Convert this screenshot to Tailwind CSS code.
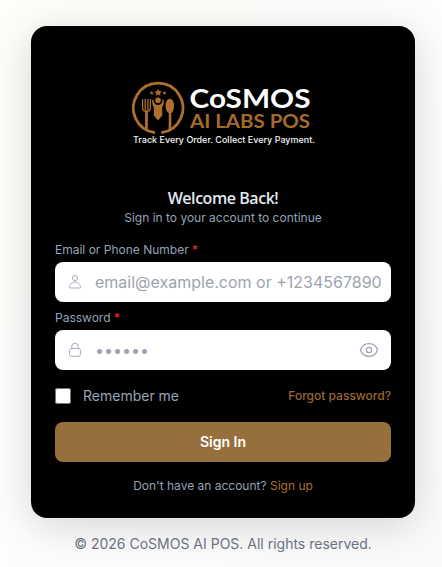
<!DOCTYPE html>
<html lang="en">
<head>
  <meta charset="UTF-8" />
  <meta name="viewport" content="width=device-width, initial-scale=1.0" />
  <title>CoSMOS AI POS - Sign In</title>
  <script src="https://cdn.jsdelivr.net/npm/@tailwindcss/browser@4"></script>
</head>
<body class="h-screen overflow-hidden bg-linear-to-br from-[#fffdf8] via-[#fdfdfd] to-[#fafafa] font-['Inter',sans-serif] text-[#94a3b8]">
  <div class="flex flex-col items-center pt-[26px] pl-1">
    <div class="w-[384px] rounded-2xl bg-black p-6 shadow-[0_8px_40px_rgba(0,0,0,0.16)]">

      <!-- Logo -->
      <div class="flex h-[136px] justify-center">
        <svg class="h-[136px] w-[336px]" viewBox="55 50 336 136" fill="none">
          <path d="M155 132.6A24.8 24.8 0 1 1 161.3 132.6" stroke="#ad702c" stroke-width="2.8" />
          <g fill="#ad702c">
            <path d="M158.2 88.8l1.1 2.3 2.5.3-1.8 1.8.5 2.5-2.3-1.2-2.3 1.2.5-2.5-1.8-1.8 2.5-.3z" />
            <path d="M151.7 90.9l.6 1.3 1.4.2-1 1 .2 1.4-1.2-.7-1.2.7.2-1.4-1-1 1.4-.2z" />
            <path d="M164.5 90.9l.6 1.3 1.4.2-1 1 .2 1.4-1.2-.7-1.2.7.2-1.4-1-1 1.4-.2z" />
            <circle cx="158" cy="100.3" r="2.8" />
            <path d="M153.3 99.6c.4 3.6 2 5.5 4.7 5.5s4.3-1.9 4.7-5.5l1.2.3c0 3.4-.5 5.6-1.7 7.2v8.5L158 120.5l-4.2-4.9v-8.5c-1.2-1.6-1.7-3.8-1.7-7.2z" />
            <path d="M169.8 98.7c2.5 0 4.2 3.1 4.2 7 0 4-1.1 6.4-2.8 7.6l.2 15.4-2.8 2 .2-17.4c-1.8-1.200-3.200-3.600-3.200-7.600 0-3.900 1.700-7 4.200-7z" />
          </g>
          <!-- Fork -->
          <path d="M142.600 98.900v9.200c0 2 1.200 3.300 3.900 3.300s3.900-1.300 3.900-3.300v-9.200M145.200 98.900v11M147.900 98.900v11" stroke="#ad702c" stroke-width="1.250" />
          <path d="M146.500 110.500v18.500" stroke="#ad702c" stroke-width="2.800" />
          <text x="189.5" y="108" class="font-['Lato',sans-serif] font-bold" font-size="27.5" textLength="121" lengthAdjust="spacingAndGlyphs" fill="#fff">CoSMOS</text>
          <text x="190" y="128.300" class="font-['Lato',sans-serif] font-bold" font-size="18.8" textLength="120" lengthAdjust="spacingAndGlyphs" fill="#a66b2b">AI LABS POS</text>
          <text x="133" y="143.200" class="font-medium" font-size="8.800" textLength="182" lengthAdjust="spacingAndGlyphs" fill="#f3f3f3">Track Every Order. Collect Every Payment.</text>
        </svg>
      </div>

      <div class="text-center">
        <h1 class="font-['Open_Sans',sans-serif] text-base font-semibold leading-6 tracking-[-0.45px] text-[#e2e8f0]">Welcome Back!</h1>
        <p class="text-xs leading-4">Sign in to your account to continue</p>
      </div>

      <form class="mt-4" onsubmit="return false">
        <label for="login" class="block text-xs leading-4">Email or Phone Number <span class="text-[#fb2c36]">*</span></label>
        <div class="mt-1 flex h-10 items-center rounded-lg bg-white pl-3">
          <svg class="size-4 shrink-0" viewBox="0 0 16 16" fill="none" stroke="#9ca3af" stroke-width=".9" stroke-linejoin="round">
            <circle cx="8" cy="4" r="2.6" />
            <path d="M5.6 8.6c1.5-.7 3.3-.7 4.8 0 1.7.8 2.9 2.4 3.1 4.4.1.7-.3 1-.9 1H3.4c-.6 0-1-.3-.9-1 .2-2 1.4-3.6 3.1-4.4z" />
          </svg>
          <input id="login" type="text" placeholder="email@example.com or +1234567890" class="ml-3 w-[296px] bg-transparent text-base outline-none placeholder:text-[#9ca3af]" />
        </div>

        <label for="password" class="mt-2 block text-xs leading-4">Password <span class="text-[#fb2c36]">*</span></label>
        <div class="mt-1 flex h-10 items-center rounded-lg bg-white px-3">
          <svg class="size-4 shrink-0" viewBox="0 0 16 16" fill="none" stroke="#9ca3af" stroke-width=".9">
            <rect x="2.6" y="6.5" width="10.8" height="7.8" rx="1.8" />
            <path d="M4.8 6.5V4.4a3.2 3.2 0 0 1 6.4 0v2.1" />
          </svg>
          <input id="password" type="password" placeholder="••••••" class="ml-3 min-w-0 flex-1 bg-transparent text-base outline-none placeholder:text-[#9ca3af]" />
          <button type="button" aria-label="Show password" class="shrink-0">
            <svg class="size-5" viewBox="0 0 20 20" fill="none" stroke="#9ca3af" stroke-width="1.2">
              <path d="M1.5 10C2.6 6.3 5.7 3.6 10 3.6s7.4 2.7 8.5 6.4c-1.1 3.7-4.2 6.4-8.5 6.400S2.600 13.700 1.500 10z" />
              <circle cx="10" cy="10" r="2.600" />
            </svg>
          </button>
        </div>

        <div class="mt-4 flex h-5 items-center justify-between">
          <label class="flex items-center gap-3 text-sm">
            <input type="checkbox" class="size-4" />
            Remember me
          </label>
          <a href="#" class="text-xs font-medium text-[#9a6735]">Forgot password?</a>
        </div>

        <button type="submit" class="mt-4 block h-10 w-full rounded-lg bg-[#966f3d] text-sm font-semibold text-white">Sign In</button>
      </form>

      <p class="mt-4 text-center text-xs leading-4">Don't have an account? <a href="#" class="text-[#ad702c]">Sign up</a></p>
    </div>

    <p class="mt-4 text-sm leading-5 text-[#6b7280]">© 2026 CoSMOS AI POS. All rights reserved.</p>
  </div>
</body>
</html>
